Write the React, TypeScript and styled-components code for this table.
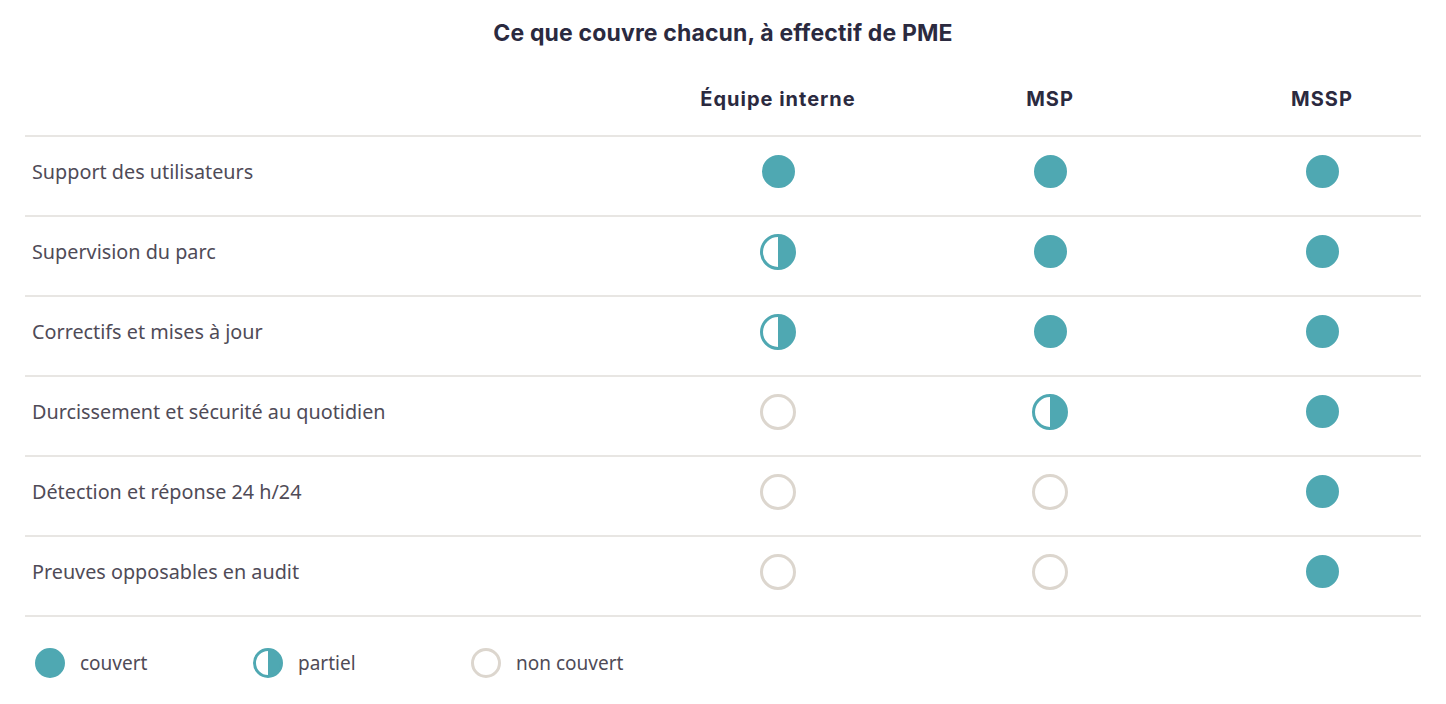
import React from 'react';
import styled, { createGlobalStyle } from 'styled-components';

const colors = {
  teal: '#4fa8b2',
  ring: '#dcd6ce',
  line: '#e8e6e3',
  heading: '#2b2a3f',
  text: '#4f4b57',
};

const GlobalStyle = createGlobalStyle`
  html, body {
    margin: 0;
    padding: 0;
    background: #ffffff;
  }
  body {
    font-family: 'Noto Sans', 'Open Sans', sans-serif;
  }
`;

type Level = 'full' | 'half' | 'none';

const rows: { label: string; values: Level[] }[] = [
  { label: 'Support des utilisateurs', values: ['full', 'full', 'full'] },
  { label: 'Supervision du parc', values: ['half', 'full', 'full'] },
  { label: 'Correctifs et mises à jour', values: ['half', 'full', 'full'] },
  { label: 'Durcissement et sécurité au quotidien', values: ['none', 'half', 'full'] },
  { label: 'Détection et réponse 24 h/24', values: ['none', 'none', 'full'] },
  { label: 'Preuves opposables en audit', values: ['none', 'none', 'full'] },
];

const columns = ['Équipe interne', 'MSP', 'MSSP'];

const Page = styled.div`
  padding: 18px 25px 0 25px;
`;

const Title = styled.h2`
  margin: 0;
  text-align: center;
  font-family: Inter, 'DejaVu Sans', sans-serif;
  font-weight: 700;
  font-size: 23px;
  line-height: 30px;
  letter-spacing: 0.15px;
  color: ${colors.heading};
`;

const Table = styled.div`
  margin-top: 16px;
`;

// first column takes the rest, value columns are fixed
const Row = styled.div<{ $head?: boolean }>`
  box-sizing: border-box;
  display: grid;
  grid-template-columns: 1fr 272px 272px 235px;
  align-items: center;
  height: ${(p) => (p.$head ? '73px' : '80px')};
  padding-bottom: ${(p) => (p.$head ? '2px' : '9px')};
  border-bottom: 2px solid ${colors.line};
`;

const Label = styled.div`
  padding-left: 7px;
  font-size: 19.8px;
  color: ${colors.text};
`;

const Cell = styled.div<{ $last?: boolean }>`
  display: flex;
  justify-content: center;
  padding-left: ${(p) => (p.$last ? '37px' : '0')};
`;

const HeadCell = styled(Cell)`
  font-family: Inter, 'DejaVu Sans', sans-serif;
  font-weight: 700;
  font-size: 20px;
  letter-spacing: 1px;
  color: ${colors.heading};
`;

const Dot = styled.span<{ $size: number; $level: Level }>`
  display: inline-block;
  box-sizing: border-box;
  width: ${(p) => p.$size}px;
  height: ${(p) => p.$size}px;
  border-radius: 50%;
  border: 3px solid ${(p) => (p.$level === 'none' ? colors.ring : colors.teal)};
  background: ${(p) =>
    p.$level === 'full'
      ? colors.teal
      : p.$level === 'half'
      ? `linear-gradient(to right, #fff 50%, ${colors.teal} 50%)`
      : '#fff'};
`;

const Legend = styled.div`
  display: grid;
  grid-template-columns: repeat(3, 218px);
  padding: 31px 0 0 10px;
`;

const LegendItem = styled.div`
  display: flex;
  align-items: center;
  gap: 15px;
  font-size: 19px;
  color: ${colors.text};
`;

export default function App() {
  return (
    <Page>
      <GlobalStyle />
      <Title>Ce que couvre chacun, à effectif de PME</Title>
      <Table>
        <Row $head>
          <div />
          {columns.map((c, i) => (
            <HeadCell key={c} $last={i === 2}>
              {c}
            </HeadCell>
          ))}
        </Row>
        {rows.map((r) => (
          <Row key={r.label}>
            <Label>{r.label}</Label>
            {r.values.map((v, i) => (
              <Cell key={i} $last={i === 2}>
                <Dot $size={v === 'full' ? 33 : 36} $level={v} />
              </Cell>
            ))}
          </Row>
        ))}
      </Table>
      <Legend>
        <LegendItem>
          <Dot $size={30} $level="full" />
          couvert
        </LegendItem>
        <LegendItem>
          <Dot $size={30} $level="half" />
          partiel
        </LegendItem>
        <LegendItem>
          <Dot $size={30} $level="none" />
          non couvert
        </LegendItem>
      </Legend>
    </Page>
  );
}
